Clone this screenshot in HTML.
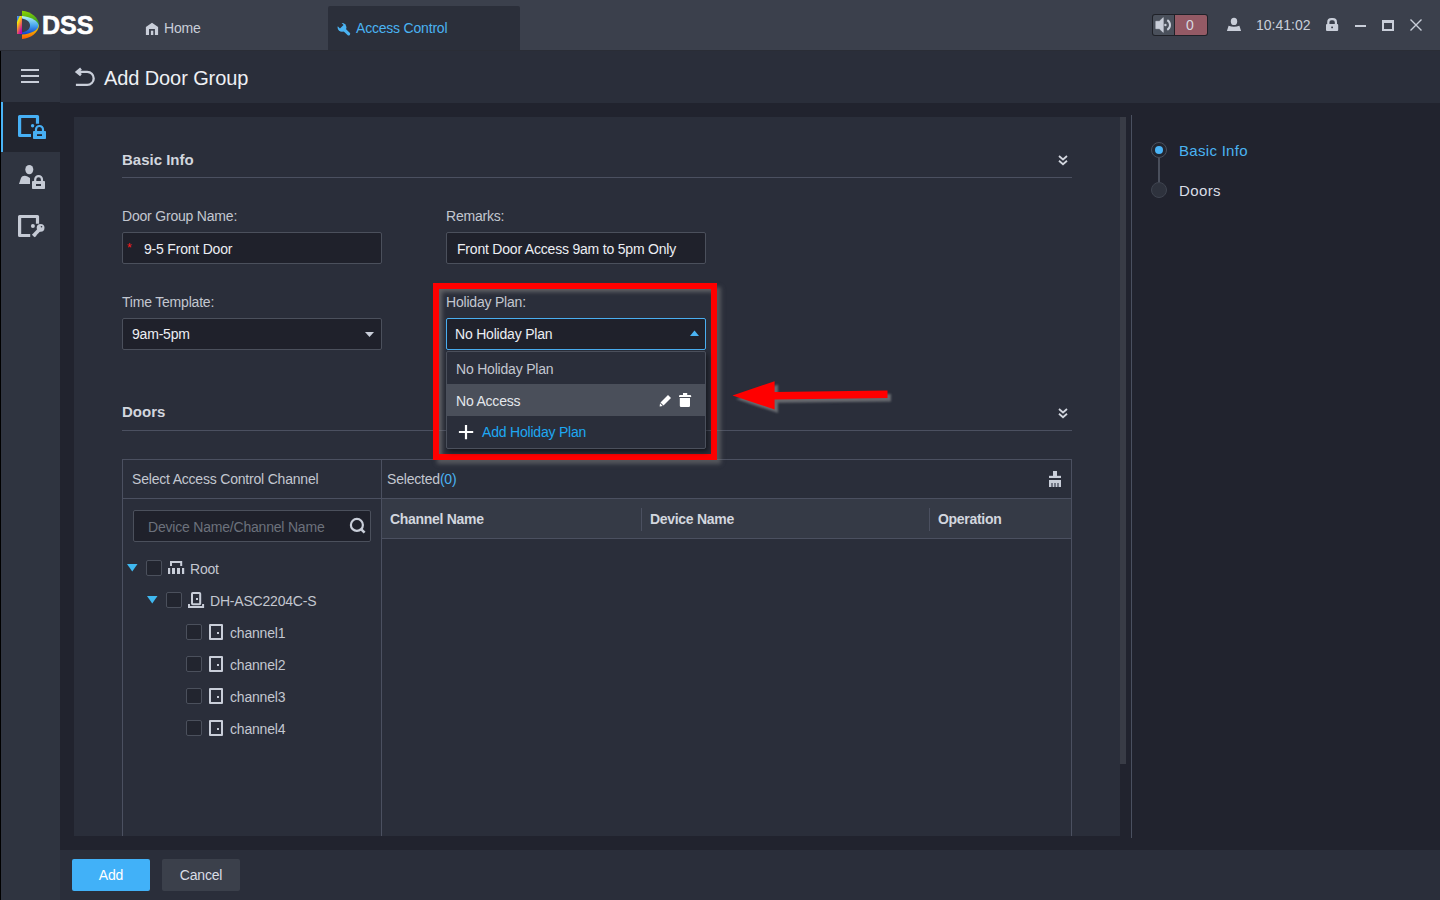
<!DOCTYPE html>
<html><head><meta charset="utf-8">
<style>
*{box-sizing:border-box;margin:0;padding:0}
html,body{width:1440px;height:900px;overflow:hidden;background:#21232e;font-family:"Liberation Sans",sans-serif;color:#d9dde6}
.a{position:absolute}
.t{position:absolute;font-size:14px;line-height:14px;letter-spacing:-0.2px;white-space:nowrap}
.lbl{color:#c3c7d0}
.inp{position:absolute;background:#1f212b;border:1px solid #4b505c;border-radius:2px}
.val{color:#eceef3}
.b{font-weight:bold}
svg{position:absolute;overflow:visible}
</style></head>
<body>
<!-- ============ top bar ============ -->
<div class="a" style="left:0;top:0;width:1440px;height:50px;background:#3b404c"></div>
<div class="a" style="left:328px;top:6px;width:192px;height:44px;background:#2b2f3a;border-radius:2px 2px 0 0"></div>
<div class="a" style="left:0;top:50px;width:1440px;height:1px;background:#2a2d36"></div>

<!-- logo -->
<svg style="left:0;top:0" width="100" height="50" viewBox="0 0 100 50">
  <defs>
    <linearGradient id="lgOut" x1="0" y1="0" x2="0" y2="1">
      <stop offset="0" stop-color="#8fd400"/><stop offset="0.45" stop-color="#2b9a28"/>
      <stop offset="0.55" stop-color="#e8e000"/><stop offset="1" stop-color="#ff5a00"/>
    </linearGradient>
    <linearGradient id="lgMid" x1="0" y1="0" x2="0" y2="1">
      <stop offset="0" stop-color="#b8f4f4"/><stop offset="0.5" stop-color="#4aa8ee"/><stop offset="1" stop-color="#0a3ccc"/>
    </linearGradient>
    <linearGradient id="lgBar" x1="0" y1="0" x2="0.6" y2="1">
      <stop offset="0" stop-color="#5aa0f0"/><stop offset="0.18" stop-color="#3a80e8"/><stop offset="0.3" stop-color="#f4f000"/><stop offset="0.6" stop-color="#f08040"/><stop offset="1" stop-color="#c000b0"/>
    </linearGradient>
  </defs>
  <path d="M22,10.8 C31,11.5 39,18 39,25 C39,32 31,38.5 22,39 Z" fill="url(#lgOut)"/>
  <path d="M22,16 C31,17 38.5,21 38.5,25.5 C38.5,30 31,34 22,34.5 Z" fill="url(#lgMid)"/>
  <path d="M22,18.5 C27,19.5 30,22 30,25.5 C30,29 27,31.5 22,32.5 Z" fill="#3b404c"/>
  <path d="M17,16 L22,16 L22,34 L17,34 Z" fill="url(#lgBar)"/>
</svg>
<div class="t b" style="left:42px;top:13px;font-size:25px;line-height:25px;color:#fff;letter-spacing:0;-webkit-text-stroke:0.6px #fff">DSS</div>

<!-- home -->
<svg style="left:145px;top:22px" width="14" height="14" viewBox="0 0 14 14">
  <path d="M0.9,5 L7,0.8 L13.1,5 L13.1,13 L9.9,13 L9.9,7 L4,7 L4,13 L0.9,13 Z" fill="#c9ced9"/>
  <rect x="5.9" y="8.7" width="2.4" height="4.3" fill="#c9ced9"/>
</svg>
<div class="t" style="left:164px;top:21px;color:#c9ced9">Home</div>

<!-- access control tab -->
<svg style="left:337px;top:22px" width="14" height="14" viewBox="0 0 14 14">
  <mask id="wm"><rect x="0" y="0" width="14" height="14" fill="#fff"/><rect x="0.5" y="0.5" width="5" height="5" transform="rotate(45 3 3)" fill="#000"/></mask>
  <circle cx="5" cy="5.4" r="4.4" fill="#4ab3f2" mask="url(#wm)"/>
  <path d="M6,6.5 L11.6,11.8" stroke="#4ab3f2" stroke-width="3.2" stroke-linecap="round"/>
</svg>
<div class="t" style="left:356px;top:21px;color:#4ab3f2">Access Control</div>

<!-- right status -->
<div class="a" style="left:1152px;top:14px;width:56px;height:22px;background:#1f2128;border-radius:3px"></div>
<div class="a" style="left:1153px;top:15px;width:21px;height:20px;background:#4a505b;border-radius:2px 0 0 2px"></div>
<div class="a" style="left:1175px;top:15px;width:32px;height:20px;background:#945a65;border-radius:0 2px 2px 0"></div>
<svg style="left:1155px;top:17px" width="17" height="16" viewBox="0 0 17 16">
  <path d="M0.8,4.3 L4.3,4.3 L8.3,0.6 L8.3,15.4 L4.3,11.7 L0.8,11.7 Z" fill="#c9ced9" stroke="#c9ced9" stroke-width="0.6" stroke-linejoin="round"/>
  <circle cx="10.4" cy="8" r="1.2" fill="#c9ced9"/>
  <path d="M12.3,3.2 A5.6,5.6 0 0 1 12.3,12.8" stroke="#c9ced9" stroke-width="2" fill="none"/>
</svg>
<div class="t" style="left:1186px;top:18px;color:#d6d9e0;letter-spacing:0">0</div>
<svg style="left:1224px;top:15px" width="20" height="19" viewBox="1224 15 20 19">
  <ellipse cx="1234" cy="21.4" rx="3.2" ry="3.6" fill="#c9ced9"/>
  <path d="M1226.9,31 L1228.6,25.8 Q1234,27.6 1239.4,25.8 L1241.1,31 Z" fill="#c9ced9"/>
</svg>
<div class="t" style="left:1256px;top:18px;color:#c9ced9;letter-spacing:0">10:41:02</div>
<svg style="left:1322px;top:15px" width="20" height="19" viewBox="1322 15 20 19">
  <path d="M1328.3,25 L1328.3,22.2 Q1328.3,19.1 1331.4,19.1 L1332.8,19.1 Q1335.9,19.1 1335.9,22.2 L1335.9,25" stroke="#c9ced9" stroke-width="2.2" fill="none"/>
  <rect x="1326" y="24" width="12.2" height="7.1" rx="1" fill="#c9ced9"/>
  <rect x="1331.2" y="26.6" width="1.8" height="1.6" fill="#3b404c"/>
</svg>
<div class="a" style="left:1355px;top:25px;width:11px;height:2px;background:#c9ced9"></div>
<div class="a" style="left:1382px;top:20px;width:12px;height:11px;border:2px solid #c9ced9;border-top-width:3px"></div>
<svg style="left:1410px;top:19px" width="12" height="12" viewBox="0 0 12 12">
  <path d="M0.5,0.5 L11.5,11.5 M11.5,0.5 L0.5,11.5" stroke="#c9ced9" stroke-width="1.4"/>
</svg>

<!-- ============ title row ============ -->
<div class="a" style="left:0;top:51px;width:60px;height:51px;background:#2f3440"></div>
<div class="a" style="left:60px;top:51px;width:1380px;height:52px;background:#2a2e3a"></div>
<div class="a" style="left:21px;top:69px;width:18px;height:2px;background:#c9ced9"></div>
<div class="a" style="left:21px;top:75px;width:18px;height:2px;background:#c9ced9"></div>
<div class="a" style="left:21px;top:81px;width:18px;height:2px;background:#c9ced9"></div>
<svg style="left:75px;top:68px" width="20" height="19" viewBox="0 0 20 19">
  <path d="M6,0.6 L2,3.9 L6,7.2" stroke="#c9ced9" stroke-width="2.8" fill="none" stroke-linejoin="miter"/>
  <path d="M3,3.9 L12.2,3.9 A6.5,6.5 0 0 1 12.2,16.9 L0.9,16.9" stroke="#c9ced9" stroke-width="2.3" fill="none"/>
</svg>
<div class="t" style="left:104px;top:68px;font-size:20px;line-height:20px;color:#eef0f4;letter-spacing:-0.1px">Add Door Group</div>

<!-- ============ sidebar ============ -->
<div class="a" style="left:0;top:102px;width:60px;height:798px;background:#2f3440"></div>
<div class="a" style="left:0;top:102px;width:60px;height:50px;background:#22252f"></div>
<div class="a" style="left:0;top:51px;width:1px;height:849px;background:#000"></div>
<div class="a" style="left:1px;top:102px;width:2px;height:50px;background:#4ab4f7"></div>
<!-- icon 1: door lock (active) -->
<svg style="left:0;top:100px" width="60" height="50" viewBox="0 0 60 50">
  <path d="M37.5,23.8 L37.5,16.5 L19.6,16.5 L19.6,35.5 L31,35.5" stroke="#47b0f5" stroke-width="3.2" fill="none" stroke-linejoin="round"/>
  <circle cx="32.6" cy="25.8" r="1.7" fill="#47b0f5"/>
  <path d="M36,32 L36,29.5 A3.5,3.5 0 0 1 43,29.5 L43,32" stroke="#47b0f5" stroke-width="2.2" fill="none"/>
  <rect x="33" y="31" width="13" height="8" rx="0.8" fill="#47b0f5"/>
  <rect x="37" y="34.2" width="5" height="1.8" fill="#22252f"/>
</svg>
<!-- icon 2: person lock -->
<svg style="left:0;top:150px" width="60" height="50" viewBox="0 0 60 50">
  <ellipse cx="29.3" cy="19.6" rx="4" ry="4.7" fill="#c5cad5"/>
  <path d="M19,34 L21,28 C22,25.5 25,25 27.5,26.5 L30,28 L30,34 Z" fill="#c5cad5"/>
  <path d="M35.2,31.5 L35.2,29.5 A3.4,3.4 0 0 1 42,29.5 L42,31.5" stroke="#c5cad5" stroke-width="2.2" fill="none"/>
  <rect x="32" y="31" width="13" height="8" rx="0.8" fill="#c5cad5"/>
  <rect x="36" y="34" width="5" height="2" fill="#2f3440"/>
</svg>
<!-- icon 3: door key -->
<svg style="left:0;top:200px" width="60" height="50" viewBox="0 0 60 50">
  <path d="M37.5,23.8 L37.5,16.5 L19.6,16.5 L19.6,35.5 L30.2,35.5" stroke="#c5cad5" stroke-width="3.2" fill="none" stroke-linejoin="round"/>
  <circle cx="32.9" cy="26" r="2" fill="#c5cad5"/>
  <circle cx="40.6" cy="27.8" r="3.9" fill="#c5cad5"/>
  <path d="M39.5,29.5 L33.2,36" stroke="#c5cad5" stroke-width="3.6" stroke-linecap="butt"/>
  <path d="M34.5,33.5 L36.5,35.5 L35,37 Z" fill="#c5cad5"/>
  <circle cx="41.5" cy="26.8" r="0.8" fill="#2f3440"/>
</svg>

<!-- ============ main ============ -->
<div class="a" style="left:74px;top:117px;width:1046px;height:719px;background:#2a2e3a"></div>
<div class="a" style="left:1120px;top:117px;width:6px;height:647px;background:#393c46"></div>
<div class="a" style="left:1131px;top:115px;width:1px;height:723px;background:#4a5060"></div>

<!-- Basic info section -->
<div class="t b" style="left:122px;top:152px;font-size:15px;line-height:15px;color:#d2d6de;letter-spacing:0">Basic Info</div>
<svg style="left:1058px;top:155px" width="10" height="11" viewBox="0 0 10 11">
  <path d="M1,1 L5,4.5 L9,1 M1,5.8 L5,9.3 L9,5.8" stroke="#d2d6de" stroke-width="1.8" fill="none"/>
</svg>
<div class="a" style="left:122px;top:177px;width:950px;height:1px;background:#4b5060"></div>

<div class="t lbl" style="left:122px;top:209px">Door Group Name:</div>
<div class="inp" style="left:122px;top:232px;width:260px;height:32px"></div>
<div class="t" style="left:127px;top:241px;color:#ff1a1a;font-size:12px">*</div>
<div class="t val" style="left:144px;top:242px">9-5 Front Door</div>

<div class="t lbl" style="left:446px;top:209px">Remarks:</div>
<div class="inp" style="left:446px;top:232px;width:260px;height:32px"></div>
<div class="t val" style="left:457px;top:242px">Front Door Access 9am to 5pm Only</div>

<div class="t lbl" style="left:122px;top:295px">Time Template:</div>
<div class="inp" style="left:122px;top:318px;width:260px;height:32px"></div>
<div class="t val" style="left:132px;top:327px">9am-5pm</div>
<svg style="left:365px;top:332px" width="10" height="6" viewBox="0 0 10 6"><path d="M0,0 L9,0 L4.5,5 Z" fill="#c9ced9"/></svg>

<!-- Doors section -->
<div class="t b" style="left:122px;top:404px;font-size:15px;line-height:15px;color:#d2d6de;letter-spacing:0">Doors</div>
<svg style="left:1058px;top:408px" width="10" height="11" viewBox="0 0 10 11">
  <path d="M1,1 L5,4.5 L9,1 M1,5.8 L5,9.3 L9,5.8" stroke="#d2d6de" stroke-width="1.8" fill="none"/>
</svg>
<div class="a" style="left:122px;top:430px;width:950px;height:1px;background:#4b5060"></div>

<!-- table -->
<div class="a" style="left:122px;top:459px;width:950px;height:377px;border:1px solid #4b5060;border-bottom:none"></div>
<div class="a" style="left:381px;top:459px;width:1px;height:377px;background:#4b5060"></div>
<div class="a" style="left:122px;top:498px;width:950px;height:1px;background:#4b5060"></div>
<div class="t lbl" style="left:132px;top:472px">Select Access Control Channel</div>
<div class="t lbl" style="left:387px;top:472px">Selected<span style="color:#4ab3f2">(0)</span></div>
<svg style="left:1045px;top:468px" width="20" height="22" viewBox="1045 468 20 22">
  <rect x="1053" y="471" width="4" height="5" fill="#c9ced9"/>
  <rect x="1049" y="475.8" width="12" height="2.2" fill="#c9ced9"/>
  <rect x="1049" y="480" width="12" height="7" fill="#c9ced9"/>
  <rect x="1051.2" y="483" width="1.6" height="4" fill="#5d6270"/>
  <rect x="1054.2" y="483" width="1.6" height="4" fill="#5d6270"/>
  <rect x="1057.2" y="483" width="1.6" height="4" fill="#5d6270"/>
</svg>

<!-- search -->
<div class="inp" style="left:133px;top:510px;width:238px;height:32px"></div>
<div class="t" style="left:148px;top:520px;color:#6c717c">Device Name/Channel Name</div>
<svg style="left:349px;top:518px" width="18" height="17" viewBox="0 0 18 17">
  <circle cx="7.9" cy="6.9" r="6" stroke="#c9ced9" stroke-width="2.2" fill="none"/>
  <path d="M12.3,11.3 L15.6,14.6" stroke="#c9ced9" stroke-width="2.6" stroke-linecap="butt"/>
</svg>

<!-- right table header -->
<div class="a" style="left:382px;top:499px;width:689px;height:39px;background:#353a46"></div>
<div class="a" style="left:382px;top:538px;width:689px;height:1px;background:#4b5060"></div>
<div class="a" style="left:641px;top:508px;width:1px;height:23px;background:#4b5060"></div>
<div class="a" style="left:929px;top:508px;width:1px;height:23px;background:#4b5060"></div>
<div class="t b" style="left:390px;top:512px;color:#d2d6de;letter-spacing:-0.3px">Channel Name</div>
<div class="t b" style="left:650px;top:512px;color:#d2d6de;letter-spacing:-0.3px">Device Name</div>
<div class="t b" style="left:938px;top:512px;color:#d2d6de;letter-spacing:-0.3px">Operation</div>

<!-- tree -->
<svg style="left:127px;top:564px" width="11" height="8" viewBox="0 0 11 8"><path d="M0,0 L10.5,0 L5.25,7.5 Z" fill="#3fb8f0"/></svg>
<div class="a" style="left:146px;top:560px;width:16px;height:16px;background:#22252f;border:1px solid #4b505c;border-radius:2px"></div>
<svg style="left:160px;top:555px" width="30" height="56" viewBox="160 555 30 56">
  <path d="M171,566 L171,562 L181.2,562 L181.2,566" stroke="#c9ced9" stroke-width="2" fill="none"/>
  <rect x="168" y="568" width="2.2" height="6" fill="#c9ced9"/>
  <rect x="172" y="568" width="3" height="6" fill="#c9ced9"/>
  <rect x="177" y="568" width="3" height="6" fill="#c9ced9"/>
  <rect x="182" y="568" width="2.2" height="6" fill="#c9ced9"/>
</svg>
<div class="t lbl" style="left:190px;top:562px">Root</div>

<svg style="left:147px;top:596px" width="11" height="8" viewBox="0 0 11 8"><path d="M0,0 L10.5,0 L5.25,7.5 Z" fill="#3fb8f0"/></svg>
<div class="a" style="left:166px;top:592px;width:16px;height:16px;background:#22252f;border:1px solid #4b505c;border-radius:2px"></div>
<svg style="left:185px;top:588px" width="22" height="24" viewBox="185 588 22 24">
  <rect x="192" y="593" width="8.2" height="11.2" rx="0.8" stroke="#c9ced9" stroke-width="2" fill="none"/>
  <rect x="196" y="598" width="2" height="2" fill="#c9ced9"/>
  <path d="M189,604 L189,607 L203.1,607 L203.1,604" stroke="#c9ced9" stroke-width="2" fill="none"/>
</svg>
<div class="t lbl" style="left:210px;top:594px">DH-ASC2204C-S</div>

<div class="a" style="left:186px;top:624px;width:16px;height:16px;background:#22252f;border:1px solid #4b505c;border-radius:2px"></div>
<div class="a" style="left:209px;top:624px;width:14px;height:16px;border:2.2px solid #c9ced9;border-radius:1px"></div>
<div class="a" style="left:217px;top:632px;width:2px;height:2px;background:#c9ced9"></div>
<div class="t lbl" style="left:230px;top:626px">channel1</div>

<div class="a" style="left:186px;top:656px;width:16px;height:16px;background:#22252f;border:1px solid #4b505c;border-radius:2px"></div>
<div class="a" style="left:209px;top:656px;width:14px;height:16px;border:2.2px solid #c9ced9;border-radius:1px"></div>
<div class="a" style="left:217px;top:664px;width:2px;height:2px;background:#c9ced9"></div>
<div class="t lbl" style="left:230px;top:658px">channel2</div>

<div class="a" style="left:186px;top:688px;width:16px;height:16px;background:#22252f;border:1px solid #4b505c;border-radius:2px"></div>
<div class="a" style="left:209px;top:688px;width:14px;height:16px;border:2.2px solid #c9ced9;border-radius:1px"></div>
<div class="a" style="left:217px;top:696px;width:2px;height:2px;background:#c9ced9"></div>
<div class="t lbl" style="left:230px;top:690px">channel3</div>

<div class="a" style="left:186px;top:720px;width:16px;height:16px;background:#22252f;border:1px solid #4b505c;border-radius:2px"></div>
<div class="a" style="left:209px;top:720px;width:14px;height:16px;border:2.2px solid #c9ced9;border-radius:1px"></div>
<div class="a" style="left:217px;top:728px;width:2px;height:2px;background:#c9ced9"></div>
<div class="t lbl" style="left:230px;top:722px">channel4</div>

<!-- ===== holiday plan with red highlight ===== -->
<div class="a" style="left:433px;top:283px;width:284px;height:177px;border:6px solid #ff0000;box-shadow:4px 4px 4px rgba(120,120,120,0.55), inset 3px 3px 4px rgba(120,120,120,0.7)"></div>
<div class="t lbl" style="left:446px;top:295px">Holiday Plan:</div>
<div class="inp" style="left:446px;top:318px;width:260px;height:32px;border-color:#4aaef0"></div>
<div class="t val" style="left:455px;top:327px">No Holiday Plan</div>
<svg style="left:690px;top:330px" width="10" height="6" viewBox="0 0 10 6"><path d="M0,6 L9,6 L4.5,0.5 Z" fill="#4ab3f2"/></svg>
<!-- dropdown list -->
<div class="a" style="left:446px;top:351px;width:260px;height:98px;background:#2a2e3a;border:1px solid #4b505c;border-radius:2px;box-shadow:2px 3px 5px rgba(0,0,0,0.5)"></div>
<div class="a" style="left:447px;top:384px;width:258px;height:32px;background:#4a4f5a"></div>
<div class="t lbl" style="left:456px;top:362px">No Holiday Plan</div>
<div class="t val" style="left:456px;top:394px;color:#e4e7ec">No Access</div>
<svg style="left:659px;top:394px" width="13" height="13" viewBox="0 0 13 13">
  <path d="M9,1 L12,4 L4.5,11.5 L1.5,8.5 Z" fill="#fff"/>
  <path d="M1,9.3 L3.7,12 L0.6,12.4 Z" fill="#fff"/>
</svg>
<svg style="left:676px;top:390px" width="18" height="20" viewBox="676 390 18 20">
  <rect x="683" y="393" width="4.2" height="2.5" fill="#fff"/>
  <path d="M679,397 L679,396.2 A1.2,1.2 0 0 1 680.2,395 L690,395 A1.2,1.2 0 0 1 691.2,396.2 L691.2,397 Z" fill="#fff"/>
  <path d="M679.8,398 L690,398 L690,405.8 A1.3,1.3 0 0 1 688.7,407.1 L681.1,407.1 A1.3,1.3 0 0 1 679.8,405.8 Z" fill="#fff"/>
</svg>
<svg style="left:458px;top:425px" width="16" height="15" viewBox="0 0 16 15">
  <path d="M8,0 L8,14.2 M0.9,7 L15.2,7" stroke="#fff" stroke-width="2.2"/>
</svg>
<div class="t" style="left:482px;top:425px;color:#1ea8f3">Add Holiday Plan</div>

<!-- arrow -->
<svg style="left:0;top:0" width="1440" height="900" viewBox="0 0 1440 900">
  <defs><filter id="sh" x="-20%" y="-50%" width="140%" height="200%"><feGaussianBlur stdDeviation="1.3"/></filter></defs>
  <path d="M736,399 L778,384.5 L778,395.5 L891,394 L891,401.5 L778,402.8 L778,413 Z" fill="#6a6d72" filter="url(#sh)" opacity="0.95"/>
  <path d="M732.5,395.6 L774.6,381.2 L774.6,391.9 L887.5,390.6 L887.5,398.1 L774.6,399.4 L774.6,409.4 Z" fill="#ff0000"/>
</svg>

<!-- right nav -->
<div class="a" style="left:1158px;top:158px;width:2px;height:24px;background:#4a4f5c"></div>
<div class="a" style="left:1151px;top:142px;width:16px;height:16px;border-radius:50%;background:#22252f;border:1.5px solid #4a4f5c"></div>
<div class="a" style="left:1155px;top:146px;width:8px;height:8px;border-radius:50%;background:#4ab4f7"></div>
<div class="a" style="left:1151px;top:182px;width:16px;height:16px;border-radius:50%;background:#2e323d;border:1.5px solid #3f4450"></div>
<div class="t" style="left:1179px;top:143px;font-size:15px;line-height:15px;color:#4ab3f2;letter-spacing:0.3px">Basic Info</div>
<div class="t" style="left:1179px;top:183px;font-size:15px;line-height:15px;color:#d9dde6;letter-spacing:0.4px">Doors</div>

<!-- ============ bottom bar ============ -->
<div class="a" style="left:60px;top:850px;width:1380px;height:50px;background:#2a2e3a"></div>
<div class="a" style="left:72px;top:859px;width:78px;height:32px;background:#41b1f8;border-radius:2px"></div>
<div class="t" style="left:72px;top:868px;width:78px;text-align:center;color:#fff">Add</div>
<div class="a" style="left:162px;top:859px;width:78px;height:32px;background:#3b404b;border-radius:2px"></div>
<div class="t" style="left:162px;top:868px;width:78px;text-align:center;color:#d9dde6">Cancel</div>
</body></html>
